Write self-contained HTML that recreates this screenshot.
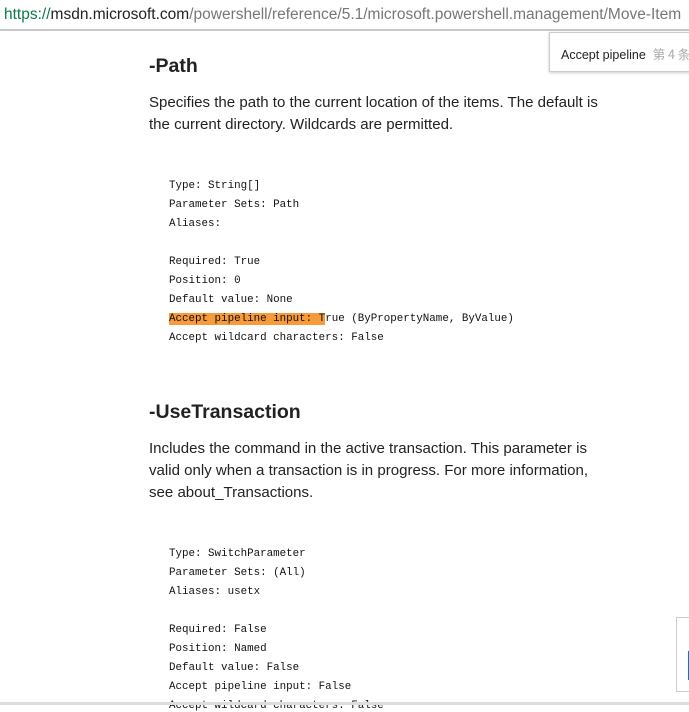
<!DOCTYPE html>
<html><head><meta charset="utf-8"><style>
body{margin:0;width:689px;height:705px;overflow:hidden;background:#fff;position:relative;font-family:"Liberation Sans",sans-serif;}
.addr{position:absolute;left:0;top:0;width:689px;height:29px;background:#fff;border-bottom:2px solid #c8c8c8;}
.addr span{position:absolute;left:4px;top:6px;font-size:15.5px;color:#777;white-space:nowrap;letter-spacing:0px}
.addr b{font-weight:normal;color:#222}
.addr i{font-style:normal;color:#0a7a4a}
h2{position:absolute;margin:0;font-size:19.5px;font-weight:bold;color:#222;left:149px}
.p{position:absolute;left:149px;font-size:15.05px;color:#222;white-space:nowrap}
.c{position:absolute;left:169px;font-family:"Liberation Mono",monospace;font-size:10.85px;color:#111;white-space:pre}
.hl{background:#f79a3a}
.pop{position:absolute;left:549px;top:32px;width:150px;height:38px;background:#fff;border:1px solid #ccc;box-shadow:0 1px 3px rgba(0,0,0,.2)}
.pop span{position:absolute;left:11px;top:11px;font-size:12.5px;color:#222;white-space:nowrap}
.pop em{font-style:normal;color:#aaa;font-family:"Noto Sans CJK SC",sans-serif}
.side{position:absolute;left:676px;top:617px;width:20px;height:73px;border:1px solid #ccc;background:#fff}
.side:after{content:"";position:absolute;left:11px;top:33px;width:2px;height:29px;background:#0078d7}
.bot{position:absolute;left:0;top:702px;width:689px;height:3px;background:#ddd}
</style></head><body>
<div class="addr"><span><i>https://</i><b>msdn.microsoft.com</b>/powershell/reference/5.1/microsoft.powershell.management/Move-Item</span></div>
<div class="pop"><span>Accept pipeline&nbsp; <em>第 4 条</em></span></div>
<h2 style="top:55px">-Path</h2>
<div class="p" style="top:94px">Specifies the path to the current location of the items. The default is</div>
<div class="p" style="top:116px">the current directory. Wildcards are permitted.</div>
<div class="c" style="top:180px">Type: String[]</div>
<div class="c" style="top:199px">Parameter Sets: Path</div>
<div class="c" style="top:218px">Aliases:</div>
<div class="c" style="top:256px">Required: True</div>
<div class="c" style="top:275px">Position: 0</div>
<div class="c" style="top:294px">Default value: None</div>
<div class="c" style="top:313px"><span class="hl">Accept pipeline input: T</span>rue (ByPropertyName, ByValue)</div>
<div class="c" style="top:332px">Accept wildcard characters: False</div>
<h2 style="top:401px">-UseTransaction</h2>
<div class="p" style="top:440px">Includes the command in the active transaction. This parameter is</div>
<div class="p" style="top:462px">valid only when a transaction is in progress. For more information,</div>
<div class="p" style="top:484px">see about_Transactions.</div>
<div class="c" style="top:548px">Type: SwitchParameter</div>
<div class="c" style="top:567px">Parameter Sets: (All)</div>
<div class="c" style="top:586px">Aliases: usetx</div>
<div class="c" style="top:624px">Required: False</div>
<div class="c" style="top:643px">Position: Named</div>
<div class="c" style="top:662px">Default value: False</div>
<div class="c" style="top:681px">Accept pipeline input: False</div>
<div class="c" style="top:700px">Accept wildcard characters: False</div>
<div class="side"></div>
<div class="bot"></div>
</body></html>
